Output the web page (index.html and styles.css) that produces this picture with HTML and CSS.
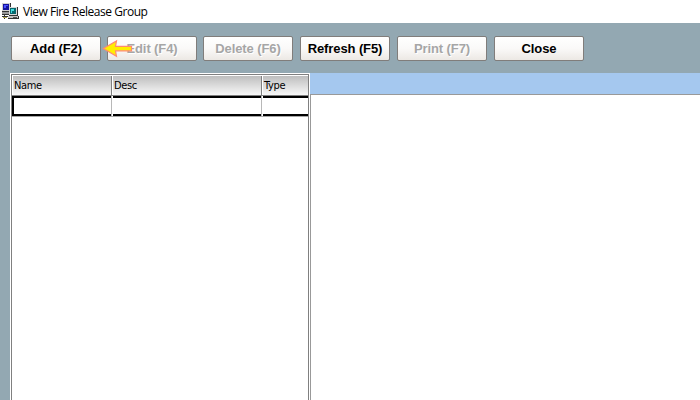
FILE: index.html
```
<!DOCTYPE html>
<html lang="en">
<head>
<meta charset="utf-8">
<title>View Fire Release Group</title>
<link rel="stylesheet" href="styles.css">
</head>
<body>
<header class="titlebar">
  <svg class="app-icon" width="17" height="17" viewBox="0 0 17 17" shape-rendering="crispEdges">
    <path fill="#333" d="M0 0h9v9H0z"/>
    <path fill="#d0d0d0" d="M0 0h8v8H0z"/>
    <path fill="#14149c" d="M1 1h6v6H1z"/>
    <path fill="#4a50ff" d="M2 2h2v3H2zM4 2h2v1H4z"/>
    <path fill="#999" d="M0 9h7v2H0z"/>
    <path fill="#333" d="M0 11h7v1H0zM0 13h6v1H0zM2 12h1v4H2z"/>
    <path fill="#aaa04a" d="M1 14h4v1H1z"/>
    <path fill="#333" d="M7 4h9v9H7z"/>
    <path fill="#d8d8d8" d="M7 4h8v8H7z"/>
    <path fill="#07696f" d="M8 5h6v6H8z"/>
    <path fill="#42dce0" d="M9 6h3v2H9zM9 8h1v2H9z"/>
    <path fill="#333" d="M6 13h11v3H6z"/>
    <path fill="#c4c4c4" d="M6 13h10v2H6z"/>
    <path fill="#555" d="M11 14h4v1h-4z"/>
  </svg>
  <h1 class="title">View Fire Release Group</h1>
</header>
<nav class="toolbar">
  <button class="btn">Add (F2)</button>
  <button class="btn off">Edit (F4)
    <svg class="arrow" width="31" height="19" viewBox="0 0 31 19">
      <path fill="#ffee00" stroke="#ff8a70" stroke-width="1.2" d="M1.3 9.6 14.5 2 13.5 7.3H29.5v4.5H13.5L14.5 17.3Z"/>
    </svg>
  </button>
  <button class="btn off">Delete (F6)</button>
  <button class="btn wide-gap">Refresh (F5)</button>
  <button class="btn off wide-gap">Print (F7)</button>
  <button class="btn wide-gap">Close</button>
</nav>
<main class="content">
  <section class="list">
    <div class="row head"><div>Name</div><div>Desc</div><div>Type</div></div>
    <div class="row entry"><div></div><div></div><div></div></div>
  </section>
  <section class="detail"><div class="band"></div><div class="pane"></div></section>
</main>
</body>
</html>
```
FILE: styles.css
```
* { box-sizing: border-box; }
body { margin: 0; width: 700px; height: 400px; overflow: hidden; display: flex; flex-direction: column; background: #93a8b2; color: #000; }
.titlebar { height: 23px; flex: none; display: flex; align-items: flex-start; gap: 4px; padding: 3px 0 0 2px; background: #fff; }
.app-icon { flex: none; }
.title { margin: 0; font: 400 12px/18px "Open Sans", "Noto Sans", sans-serif; letter-spacing: -.46px; white-space: nowrap; }
.toolbar { height: 50px; flex: none; display: flex; gap: 6px; padding: 13px 0 0 11px; }
.btn { position: relative; width: 90px; height: 25px; padding: 0; flex: none; border: 1px solid #807d7b; border-radius: 2px; background: linear-gradient(#fff, #faf9f8 50%, #ece8e4); font: 700 13px/23px "Liberation Sans", Arial, sans-serif; letter-spacing: -.1px; color: #000; white-space: nowrap; text-align: center; }
.off { color: #a6a6a6; text-shadow: 1px 1px #fff; }
.wide-gap { margin-left: 1px; }
.arrow { position: absolute; left: -6px; top: 2px; }
.content { flex: 1; min-height: 0; display: flex; padding-left: 10px; }
.list { width: 299px; flex: none; background: #fff; border-left: 1px solid #fff; border-top: 1px solid #fff; box-shadow: inset 1px 1px #808080, inset -1px 0 #808080; padding: 2px 1px 0; }
.row { display: grid; grid-template-columns: 100px 150px 46px; }
.head { height: 20px; font: 11px/19px "DejaVu Sans Condensed", "DejaVu Sans", sans-serif; letter-spacing: -.35px; background: linear-gradient(#bebebe, #f8f8f8); border-bottom: 1px solid #808080; }
.head div { border-left: 1px solid #fff; border-right: 1px solid #808080; padding-left: 1px; }
.head div:last-child { border-right: 0; }
.entry { height: 21px; border-bottom: 1px solid #a8a8a8; }
.entry div { border-right: 1px solid #b8b8b8; background: linear-gradient(#000 2px, #fff 2px, #fff 18px, #000 18px) 1px 0 no-repeat; }
.entry div:first-child { border-left: 2px solid #000; background-position: 0 0; }
.entry div:last-child { border-right: 0; }
.detail { flex: 1; display: flex; flex-direction: column; border-left: 1px solid #fff; }
.band { height: 21px; background: #a5c8ef; }
.pane { flex: 1; background: #fff; border-left: 1px solid #999; border-top: 1px solid #999; }
```
